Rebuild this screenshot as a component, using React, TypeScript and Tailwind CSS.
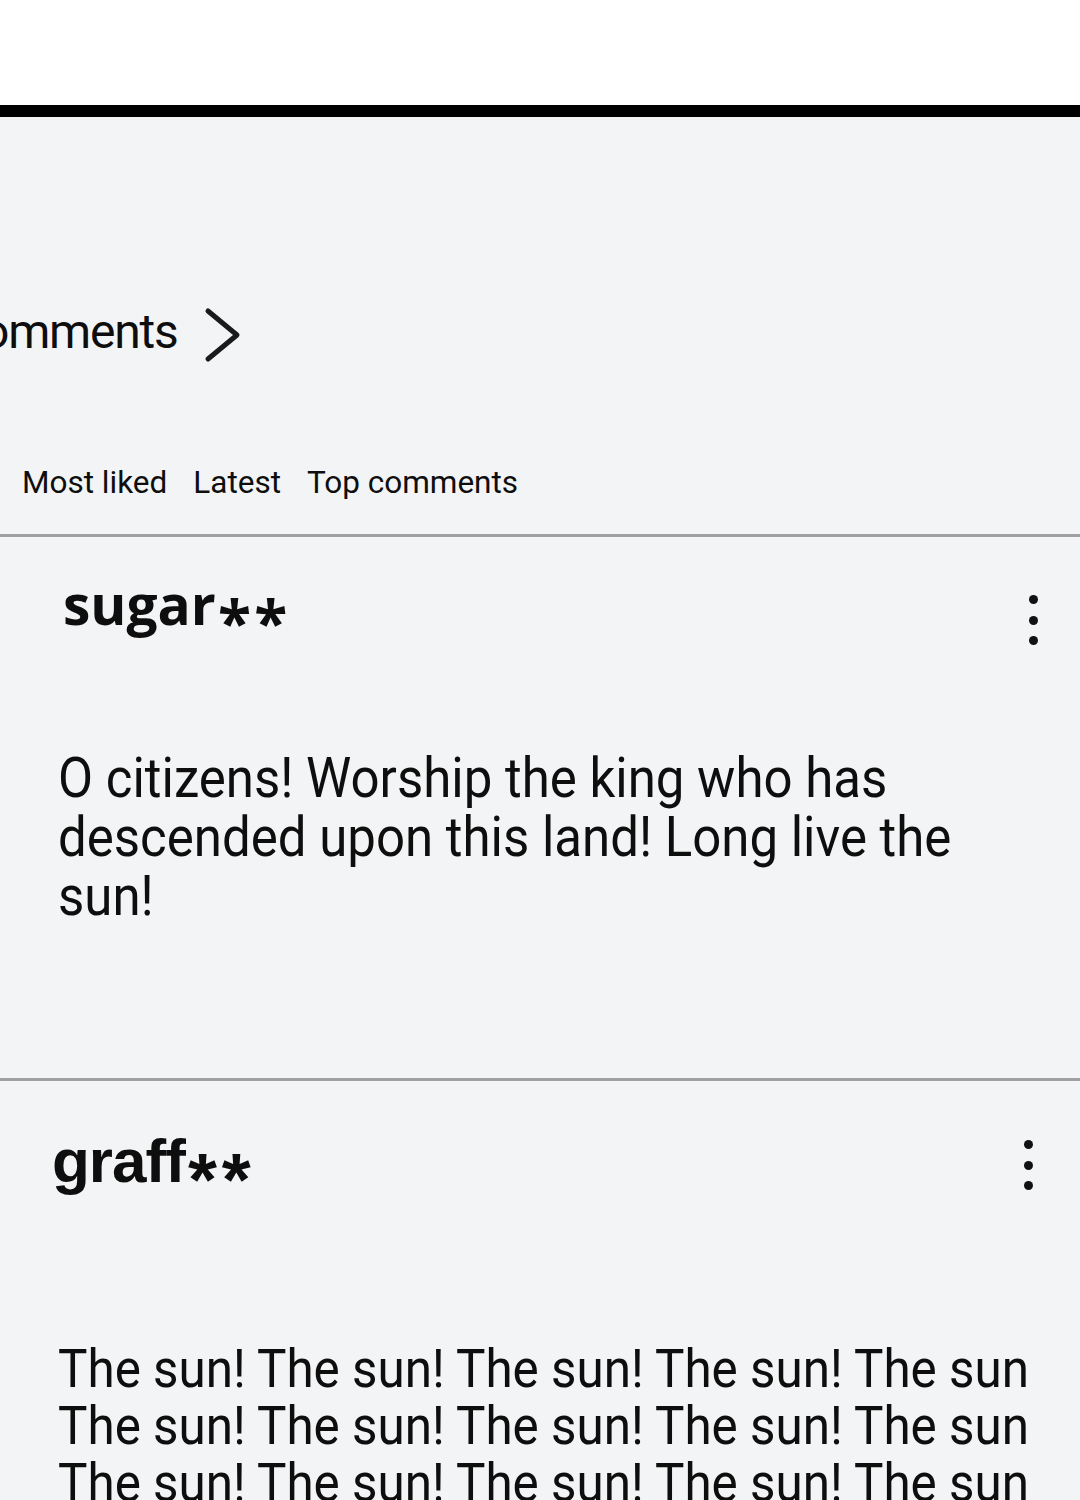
import React from "react";

function Kebab() {
  return (
    <div className="flex flex-col items-center gap-[11.5px]">
      <span className="block h-[9px] w-[9px] rounded-full bg-[#111]" />
      <span className="block h-[9px] w-[9px] rounded-full bg-[#111]" />
      <span className="block h-[9px] w-[9px] rounded-full bg-[#111]" />
    </div>
  );
}

export default function App() {
  const roboto = { fontFamily: "Roboto, 'Liberation Sans', sans-serif" };
  const sunLine = "The sun! The sun! The sun! The sun! The sun";
  return (
    <div className="w-[1080px] h-[1500px] overflow-hidden bg-[#f3f4f5]">
      <div className="h-[105px] bg-white" />
      <div className="h-[12px] bg-black" />
      <div style={roboto} className="text-[#0e0e0e]">
        {/* header */}
        <div className="pt-[188px]">
          <div className="h-[60px] flex items-start -ml-[48px]">
            <span className="mt-[3px] text-[48px] leading-none tracking-[-1.2px]">Comments</span>
            <svg width="40" height="60" viewBox="0 0 40 60" className="ml-[24px] shrink-0" fill="none">
              <path d="M6 6 L35 30 L6 54" stroke="#1a1a1a" strokeWidth="5" strokeLinecap="round" strokeLinejoin="round" />
            </svg>
          </div>
        </div>
        {/* tabs */}
        <div className="mt-[102px] h-[32px] flex items-start pl-[22px] gap-[26px] text-[31.5px] leading-none">
          <span>Most liked</span>
          <span>Latest</span>
          <span>Top comments</span>
        </div>
        <div className="mt-[35px] h-[3px] bg-[#a0a0a0]" />

        {/* comment 1 */}
        <div className="h-[541px] pt-[39px]">
          <div className="h-[70px] flex items-start justify-between pl-[63px] pr-[42px]">
            <span
              className="text-[55px] font-bold leading-none"
              style={{ fontFamily: "'Open Sans', 'Noto Sans', sans-serif" }}
            >
              sugar
              <span className="inline-block origin-left translate-y-[17px] scale-[1.1] tracking-[3px] ml-[2px]">**</span>
            </span>
            <div className="mt-[19px]"><Kebab /></div>
          </div>
          <div className="mt-[103px] pl-[58px] text-[55px] leading-[59px] whitespace-nowrap">
            <div className="origin-left scale-x-[0.927]">O citizens! Worship the king who has</div>
            <div className="origin-left scale-x-[0.927]">descended upon this land! Long live the</div>
            <div className="origin-left scale-x-[0.927]">sun!</div>
          </div>
        </div>
        <div className="h-[3px] bg-[#a0a0a0]" />

        {/* comment 2 */}
        <div className="pt-[49px]">
          <div className="h-[70px] flex items-start justify-between pl-[52px] pr-[47px]">
            <span
              className="text-[62px] font-bold leading-none tracking-[-1px]"
              style={{ fontFamily: "'Liberation Sans', Arial, sans-serif" }}
            >
              graff
              <span className="inline-block origin-left translate-y-[19px] scale-[1.2] tracking-[4px] ml-[3px]">**</span>
            </span>
            <div className="mt-[10px]"><Kebab /></div>
          </div>
          <div className="mt-[140px] pl-[58px] text-[54px] leading-[57px] whitespace-nowrap">
            <div className="origin-left scale-x-[0.914]">{sunLine}</div>
            <div className="origin-left scale-x-[0.914]">{sunLine}</div>
            <div className="origin-left scale-x-[0.914]">{sunLine}</div>
          </div>
        </div>
      </div>
    </div>
  );
}
